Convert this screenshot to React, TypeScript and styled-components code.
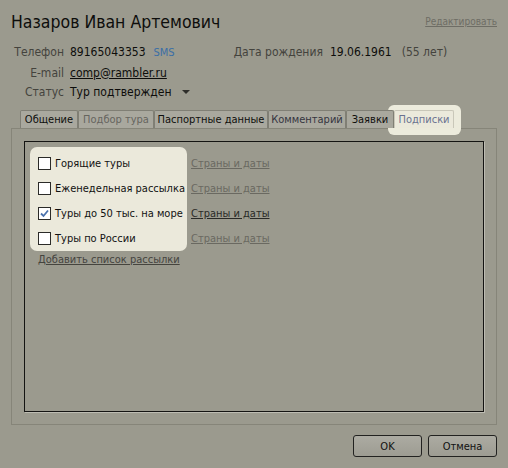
import React from "react";
import styled, { createGlobalStyle } from "styled-components";

const Global = createGlobalStyle`
  html, body { margin: 0; padding: 0; background: #9b9a8e; }
  body {
    font-family: "DejaVu Sans Condensed", "DejaVu Sans", sans-serif;
    font-stretch: condensed;
    font-size: 11px;
    color: #111;
  }
`;

const Page = styled.div`
  width: 508px;
  height: 468px;
  box-sizing: border-box;
  padding: 11px 11px 0 11px;
  background: #9b9a8e;
  display: flex;
  flex-direction: column;
`;

const TitleRow = styled.div`
  display: flex;
  justify-content: space-between;
  align-items: flex-start;
  height: 22px;
`;

const Title = styled.h1`
  margin: 0;
  font-size: 17.5px;
  line-height: 22px;
  font-weight: normal;
  color: #0e0e0c;
`;

const EditLink = styled.a`
  font-size: 10px;
  line-height: 12px;
  margin-top: 5px;
  color: #6e6d65;
  text-decoration: underline;
`;

const Info = styled.div`
  margin-top: 9px;
  display: grid;
  grid-template-columns: 53px 1fr;
  grid-template-rows: 20px 21px 17px;
  column-gap: 6px;
  align-items: center;
  font-size: 12px;
`;

const Label = styled.span`
  text-align: right;
  color: #44433d;
`;

const Value = styled.span`
  display: flex;
  align-items: center;
  color: #0d0d0b;
  white-space: nowrap;
`;

const Sms = styled.span`
  margin-left: 8px;
  font-size: 11px;
  color: #3a6ea6;
`;

const Extra = styled.span<{ $gap: number; $dark?: boolean }>`
  margin-left: ${(p) => p.$gap}px;
  color: ${(p) => (p.$dark ? "#0d0d0b" : "#44433d")};
`;

const Email = styled.a`
  color: #0d0d0b;
  text-decoration: underline;
`;

const Caret = styled.span`
  margin-left: 11px;
  width: 0;
  height: 0;
  border-left: 4px solid transparent;
  border-right: 4px solid transparent;
  border-top: 4px solid #2e2e2a;
`;

const Tabs = styled.div`
  margin-top: 10px;
  padding-left: 9px;
  display: flex;
  height: 18px;
  position: relative;
  z-index: 1;
`;

const Tab = styled.div<{ $color: string; $w: number; $selected?: boolean }>`
  position: relative;
  box-sizing: border-box;
  width: ${(p) => p.$w}px;
  height: 18px;
  display: flex;
  align-items: center;
  justify-content: center;
  color: ${(p) => p.$color};
  background: ${(p) => (p.$selected ? "#ebe9db" : "#a9a89e")};
  border: 1px solid ${(p) => (p.$selected ? "#c9c7b9" : "#807f75")};
  border-bottom: none;
  border-radius: 2px 2px 0 0;
  white-space: nowrap;
  ${(p) =>
    p.$selected
      ? `
    &::before {
      content: "";
      position: absolute;
      left: -7px; right: -8px; top: -6px; bottom: -7px;
      background: #ecebdc;
      border-radius: 6px;
      z-index: -1;
    }
  `
      : ""}
`;

const Panel = styled.div`
  box-sizing: border-box;
  height: 297px;
  border: 1px solid #868579;
  padding: 12px;
  display: flex;
`;

const Inner = styled.div`
  flex: 1;
  border: 1px solid #141412;
  box-shadow: 1px 1px 0 #bdbcb2;
  padding: 5px;
  display: flex;
  flex-direction: column;
`;

const Lists = styled.div`
  display: flex;
  gap: 4px;
`;

const CreamColumn = styled.div`
  width: 157px;
  box-sizing: border-box;
  background: #ebe9db;
  border-radius: 7px;
  padding: 4px 0 0 8px;
  display: flex;
  flex-direction: column;
`;

const LinkColumn = styled.div`
  padding-top: 4px;
  display: flex;
  flex-direction: column;
`;

const Row = styled.div`
  height: 25px;
  display: flex;
  align-items: center;
  gap: 4px;
  white-space: nowrap;
`;

const Box = styled.span`
  box-sizing: border-box;
  width: 13px;
  height: 13px;
  background: #fff;
  border: 1px solid #2b2b28;
  display: flex;
  align-items: center;
  justify-content: center;
`;

const RowLink = styled.a<{ $dark?: boolean }>`
  color: ${(p) => (p.$dark ? "#2a2a27" : "#6a6961")};
  text-decoration: underline;
`;

const AddLink = styled.a`
  margin-left: 8px;
  height: 18px;
  line-height: 18px;
  color: #45443e;
  text-decoration: underline;
`;

const Buttons = styled.div`
  margin-top: 10px;
  display: flex;
  justify-content: flex-end;
  gap: 6px;
`;

const Button = styled.button`
  box-sizing: border-box;
  width: 69px;
  height: 22px;
  font-family: inherit;
  font-stretch: condensed;
  font-size: 11px;
  color: #111;
  background: linear-gradient(#acaba2, #9d9c92);
  border: 1px solid #222220;
  border-radius: 3px;
  padding: 0;
`;

const Check = () => (
  <svg width="9" height="9" viewBox="0 0 9 9">
    <path d="M1 4.5 L3.5 7 L8 1.5" fill="none" stroke="#4a72ae" strokeWidth="1.8" />
  </svg>
);

const lists = [
  { name: "Горящие туры", checked: false },
  { name: "Еженедельная рассылка", checked: false },
  { name: "Туры до 50 тыс. на море", checked: true },
  { name: "Туры по России", checked: false },
];

const tabs = [
  { name: "Общение", color: "#0f0f0d", w: 58 },
  { name: "Подбор тура", color: "#66655e", w: 76 },
  { name: "Паспортные данные", color: "#0f0f0d", w: 114 },
  { name: "Комментарий", color: "#35353f", w: 78 },
  { name: "Заявки", color: "#0f0f0d", w: 48 },
  { name: "Подписки", color: "#6a7190", w: 60, selected: true },
];

export default function App() {
  return (
    <>
      <Global />
      <Page>
        <TitleRow>
          <Title>Назаров Иван Артемович</Title>
          <EditLink>Редактировать</EditLink>
        </TitleRow>
        <Info>
          <Label>Телефон</Label>
          <Value>
            89165043353
            <Sms>SMS</Sms>
            <Extra $gap={59}>Дата рождения</Extra>
            <Extra $gap={7} $dark>19.06.1961</Extra>
            <Extra $gap={10}>(55 лет)</Extra>
          </Value>
          <Label>E-mail</Label>
          <Value>
            <Email>comp@rambler.ru</Email>
          </Value>
          <Label>Статус</Label>
          <Value>
            Тур подтвержден
            <Caret />
          </Value>
        </Info>
        <Tabs>
          {tabs.map((t) => (
            <Tab key={t.name} $color={t.color} $w={t.w} $selected={t.selected}>
              {t.name}
            </Tab>
          ))}
        </Tabs>
        <Panel>
          <Inner>
            <Lists>
              <CreamColumn>
                {lists.map((l) => (
                  <Row key={l.name}>
                    <Box>{l.checked && <Check />}</Box>
                    {l.name}
                  </Row>
                ))}
              </CreamColumn>
              <LinkColumn>
                {lists.map((l) => (
                  <Row key={l.name}>
                    <RowLink $dark={l.checked}>Страны и даты</RowLink>
                  </Row>
                ))}
              </LinkColumn>
            </Lists>
            <AddLink>Добавить список рассылки</AddLink>
          </Inner>
        </Panel>
        <Buttons>
          <Button>OK</Button>
          <Button>Отмена</Button>
        </Buttons>
      </Page>
    </>
  );
}
